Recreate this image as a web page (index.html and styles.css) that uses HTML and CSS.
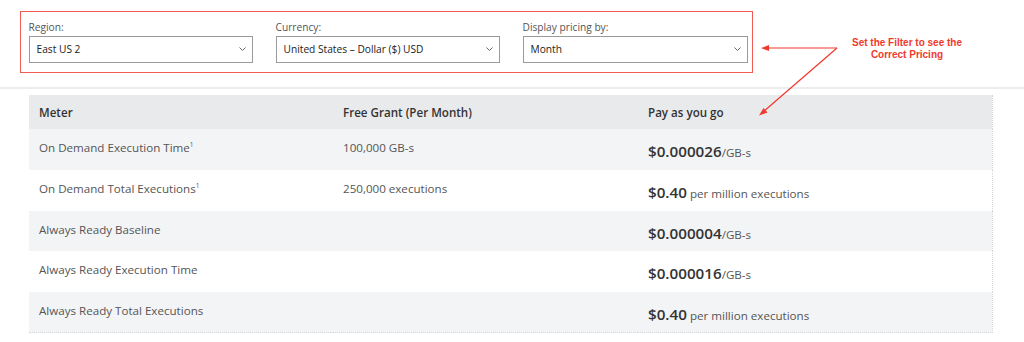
FILE: index.html
```html
<!DOCTYPE html>
<html lang="en">
<head>
<meta charset="utf-8">
<title>Pricing</title>
<link rel="stylesheet" href="styles.css">
</head>
<body>
<div class="page">
  <section class="filter-band">
    <div class="filter-box">
      <div class="field">
        <div class="label">Region:</div>
        <div class="select"><span>East US 2</span><svg class="chev" width="7" height="4" viewBox="0 0 7 4"><path d="M0.5 0.5 L3.5 3.5 L6.5 0.5" fill="none" stroke="#666" stroke-width="1"/></svg></div>
      </div>
      <div class="field">
        <div class="label">Currency:</div>
        <div class="select"><span>United States – Dollar ($) USD</span><svg class="chev" width="7" height="4" viewBox="0 0 7 4"><path d="M0.5 0.5 L3.5 3.5 L6.5 0.5" fill="none" stroke="#666" stroke-width="1"/></svg></div>
      </div>
      <div class="field">
        <div class="label">Display pricing by:</div>
        <div class="select"><span>Month</span><svg class="chev" width="7" height="4" viewBox="0 0 7 4"><path d="M0.5 0.5 L3.5 3.5 L6.5 0.5" fill="none" stroke="#666" stroke-width="1"/></svg></div>
      </div>
    </div>
  </section>

  <table class="pricing">
    <colgroup><col class="c1"><col class="c2"><col class="c3"></colgroup>
    <thead>
      <tr><th>Meter</th><th>Free Grant (Per Month)</th><th>Pay as you go</th></tr>
    </thead>
    <tbody>
      <tr><td>On Demand Execution Time<sup>1</sup></td><td>100,000 GB-s</td><td class="price"><b>$0.000026</b><span class="unit">/GB-s</span></td></tr>
      <tr><td>On Demand Total Executions<sup>1</sup></td><td>250,000 executions</td><td class="price"><b>$0.40</b><span class="unit"> per million executions</span></td></tr>
      <tr><td>Always Ready Baseline</td><td></td><td class="price"><b>$0.000004</b><span class="unit">/GB-s</span></td></tr>
      <tr><td>Always Ready Execution Time</td><td></td><td class="price"><b>$0.000016</b><span class="unit">/GB-s</span></td></tr>
      <tr><td>Always Ready Total Executions</td><td></td><td class="price"><b>$0.40</b><span class="unit"> per million executions</span></td></tr>
    </tbody>
  </table>

  <svg class="arrows" width="1024" height="342" viewBox="0 0 1024 342">
    <g stroke="#f03a2e" stroke-width="1.2" fill="none">
      <line x1="837" y1="48" x2="766" y2="48"/>
      <line x1="837" y1="48" x2="763" y2="112"/>
    </g>
    <g fill="#f03a2e">
      <polygon points="761,48 769,45 769,51"/>
      <polygon points="759,115.5 763.5,108 767.5,112.5"/>
    </g>
  </svg>
  <div class="note">Set the Filter to see the<br>Correct Pricing</div>
</div>
</body>
</html>
```

FILE: styles.css
```css
* { box-sizing: border-box; }
html, body { margin: 0; padding: 0; background: #fff; }
body {
  font-family: "Open Sans", "Noto Sans", "Liberation Sans", sans-serif;
  color: #444;
  width: 1024px;
  height: 342px;
  overflow: hidden;
}
.page { position: relative; width: 1024px; height: 342px; }

.filter-band {
  height: 89px;
  padding: 11px 0 0 20px;
  border-bottom: 2px solid #ededed;
}
.filter-box {
  width: 733px;
  height: 62px;
  border: 1.5px solid #f25b55;
  padding: 7.5px 4px 0 7.5px;
  display: grid;
  grid-template-columns: 224px 224px 225px;
  column-gap: 23px;
}
.label {
  font-size: 10.2px;
  line-height: 14px;
  height: 16px;
  color: #555;
}
.select {
  height: 27px;
  border: 1.5px solid #9a9a9a;
  display: flex;
  align-items: center;
  justify-content: space-between;
  padding: 0 6px 0 7px;
  font-size: 10.2px;
  color: #222;
}
.chev { display: block; margin-top: 0; }

.pricing {
  margin: 6px 0 0 29px;
  width: 963px;
  border-collapse: collapse;
  table-layout: fixed;
  border-right: 1px dotted #d6d6d6;
  border-bottom: 1px dotted #d6d6d6;
}
col.c1 { width: 304px; }
col.c2 { width: 305px; }
col.c3 { width: 354px; }
.pricing th {
  background: #e9eaec;
  text-align: left;
  font-weight: 600;
  font-size: 11.6px;
  color: #333;
  height: 34px;
  padding: 1px 10px 0;
  vertical-align: middle;
}
.pricing td {
  height: 40.8px;
  padding: 9px 10px 0;
  vertical-align: top;
  font-size: 11.6px;
  line-height: 19px;
  color: #555;
}
.pricing tbody tr:nth-child(odd) td { background: #f3f4f6; }
.pricing tbody tr:nth-child(even) td { background: #fff; }
.pricing sup { font-size: 6.5px; line-height: 0; vertical-align: 5px; }
.pricing td.price { line-height: 24px; padding-top: 10px; }
.price b { font-weight: 600; font-size: 15.2px; color: #333; }
.price .unit { font-size: 11.6px; color: #555; }

.arrows { position: absolute; left: 0; top: 0; pointer-events: none; }
.note {
  position: absolute;
  left: 847px;
  top: 37px;
  width: 120px;
  text-align: center;
  font-family: "Liberation Sans", Arial, sans-serif;
  font-weight: bold;
  font-size: 10px;
  line-height: 12px;
  color: #f03a2e;
}
```
